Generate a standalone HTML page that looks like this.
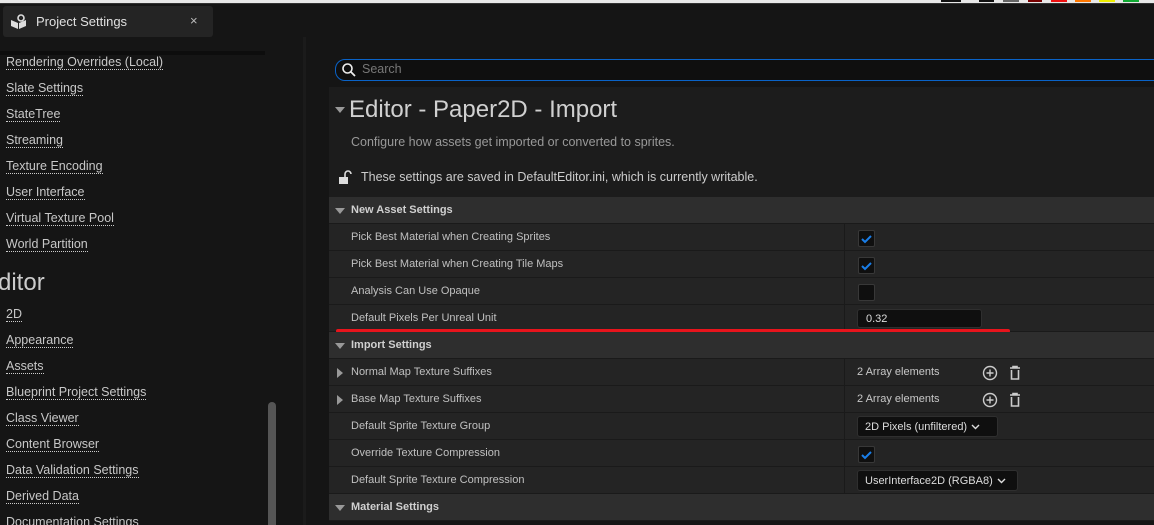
<!DOCTYPE html><html><head><style>
html,body{margin:0;width:1154px;height:525px;overflow:hidden}
body{background:#151515;font-family:"Liberation Sans",sans-serif;position:relative}
.a{position:absolute}
.l{position:absolute;left:6px;font-size:12.5px;color:#c8c8c8;border-bottom:1px dotted #ccc;line-height:14px}
.row{position:absolute;left:329px;width:825px;height:26px;background:#242424;border-bottom:1px solid #1a1a1a}
.row .t{position:absolute;left:22px;top:7px;font-size:11px;color:#c0c0c0}
.row .d{position:absolute;left:515px;top:0;width:1px;height:27px;background:#1a1a1a}
.hd{background:#2e2e2e}
.hd .t{font-weight:bold;color:#d0d0d0}
.tri{position:absolute;left:6px;top:11px;width:0;height:0;border-left:5px solid transparent;border-right:5px solid transparent;border-top:6px solid #999}
.trr{position:absolute;left:8px;top:9px;width:0;height:0;border-top:5px solid transparent;border-bottom:5px solid transparent;border-left:6px solid #999}
.cb{position:absolute;left:529px;top:6px;width:15px;height:15px;background:#0f0f0f;border:1px solid #383838;border-radius:2px}
.v{position:absolute;left:528px;font-size:11px;color:#c8c8c8}
.box{position:absolute;background:#0f0f0f;border:1px solid #2f2f2f;border-radius:3px;font-size:11px;color:#ddd;box-sizing:border-box;padding:4px 7px}
.ch{display:inline-block;vertical-align:middle;margin-left:4px}
</style></head><body>
<div class="a" style="left:0;top:0;width:1154px;height:3px;background:#e8e8e8"></div>
<div class="a" style="left:941px;top:0;width:20px;height:2px;background:#111"></div>
<div class="a" style="left:979px;top:0;width:15px;height:2px;background:#111"></div>
<div class="a" style="left:1003px;top:0;width:16px;height:2px;background:#666"></div>
<div class="a" style="left:1028px;top:0;width:14px;height:2px;background:#700"></div>
<div class="a" style="left:1051px;top:0;width:16px;height:2px;background:#e11"></div>
<div class="a" style="left:1075px;top:0;width:16px;height:2px;background:#f70"></div>
<div class="a" style="left:1099px;top:0;width:16px;height:2px;background:#ee0"></div>
<div class="a" style="left:1123px;top:0;width:16px;height:2px;background:#1a3"></div>
<div class="a" style="left:0;top:3px;width:1154px;height:1px;background:#333"></div>
<div class="a" style="left:3px;top:6px;width:210px;height:31px;background:#242424;border-radius:3px"></div>
<svg class="a" style="left:10px;top:13px" width="18" height="16" viewBox="0 0 18 16"><path d="M1 7l7 3v6l-7-3z M9 10l7-3v6l-7 3z" fill="#ddd"/><circle cx="11" cy="5" r="3" fill="none" stroke="#ddd" stroke-width="1.6"/></svg>
<div class="a" style="left:36px;top:14px;font-size:13px;color:#e0e0e0">Project Settings</div>
<div class="a" style="left:190px;top:13px;font-size:13px;color:#bbb">×</div>
<div class="a" style="left:0;top:51px;width:265px;height:4px;background:#0d0d0d"></div>
<div class="a" style="left:303px;top:37px;width:3px;height:488px;background:#1b1b1b"></div>
<div class="l" style="top:55px">Rendering Overrides (Local)</div>
<div class="l" style="top:81px">Slate Settings</div>
<div class="l" style="top:107px">StateTree</div>
<div class="l" style="top:133px">Streaming</div>
<div class="l" style="top:159px">Texture Encoding</div>
<div class="l" style="top:185px">User Interface</div>
<div class="l" style="top:211px">Virtual Texture Pool</div>
<div class="l" style="top:237px">World Partition</div>
<div class="a" style="left:-2px;top:269px;font-size:24px;color:#ccc">ditor</div>
<div class="l" style="top:307px">2D</div>
<div class="l" style="top:333px">Appearance</div>
<div class="l" style="top:359px">Assets</div>
<div class="l" style="top:385px">Blueprint Project Settings</div>
<div class="l" style="top:411px">Class Viewer</div>
<div class="l" style="top:437px">Content Browser</div>
<div class="l" style="top:463px">Data Validation Settings</div>
<div class="l" style="top:489px">Derived Data</div>
<div class="l" style="top:515px">Documentation Settings</div>
<div class="a" style="left:268px;top:402px;width:8px;height:130px;background:#555;border-radius:4px"></div>
<div class="a" style="left:335px;top:59px;width:830px;height:22px;box-sizing:border-box;border:1px solid #0a63c8;border-radius:10px;background:#0f0f0f"></div>
<svg class="a" style="left:341px;top:62px" width="16" height="16" viewBox="0 0 16 16"><circle cx="6.5" cy="6.5" r="4.5" fill="none" stroke="#eee" stroke-width="1.6"/><path d="M10 10l4 4" stroke="#eee" stroke-width="1.8"/></svg>
<div class="a" style="left:362px;top:62px;font-size:12.5px;color:#777">Search</div>
<div class="a" style="left:329px;top:87px;width:825px;height:110px;background:#1c1c1c"></div>
<div class="a" style="left:335px;top:107px;width:0;height:0;border-left:5px solid transparent;border-right:5px solid transparent;border-top:6px solid #999"></div>
<div class="a" style="left:349px;top:96px;font-size:24px;color:#d0d0d0">Editor - Paper2D - Import</div>
<div class="a" style="left:351px;top:135px;font-size:12.5px;color:#999">Configure how assets get imported or converted to sprites.</div>
<svg class="a" style="left:338px;top:169px" width="14" height="16" viewBox="0 0 14 16"><rect x="1" y="8" width="9" height="7" fill="#ddd"/><path d="M7 8V5a3 3 0 0 1 6 0" fill="none" stroke="#ddd" stroke-width="1.6"/></svg>
<div class="a" style="left:361px;top:170px;font-size:12.5px;color:#ccc">These settings are saved in DefaultEditor.ini, which is currently writable.</div>
<div class="row hd" style="top:197px"><div class="tri"></div><div class="t">New Asset Settings</div></div>
<div class="row" style="top:224px"><div class="t">Pick Best Material when Creating Sprites</div><div class="d"></div><div class="cb"><svg width="15" height="15"><path d="M3 8l3 3 6-6" stroke="#1a7ee8" stroke-width="2" fill="none"/></svg></div></div>
<div class="row" style="top:251px"><div class="t">Pick Best Material when Creating Tile Maps</div><div class="d"></div><div class="cb"><svg width="15" height="15"><path d="M3 8l3 3 6-6" stroke="#1a7ee8" stroke-width="2" fill="none"/></svg></div></div>
<div class="row" style="top:278px"><div class="t">Analysis Can Use Opaque</div><div class="d"></div><div class="cb"></div></div>
<div class="row" style="top:305px"><div class="t">Default Pixels Per Unreal Unit</div><div class="d"></div><div class="box" style="left:528px;top:4px;width:125px;height:19px;padding:3px 8px">0.32</div></div>
<div class="a" style="left:336px;top:329px;width:674px;height:4px;background:#e8141c;border-radius:2px"></div>
<div class="row hd" style="top:332px"><div class="tri"></div><div class="t">Import Settings</div></div>
<div class="row" style="top:359px"><div class="trr"></div><div class="t">Normal Map Texture Suffixes</div><div class="d"></div><div class="v" style="top:7px">2 Array elements</div>
<svg class="a" style="left:653px;top:6px" width="40" height="16"><circle cx="8" cy="8" r="6.5" fill="none" stroke="#ccc" stroke-width="1.4"/><path d="M8 4.5v7M4.5 8h7" stroke="#ccc" stroke-width="1.4"/><path d="M28 3h10M31 3V1.5h4V3M29.5 5v9h7V5" fill="none" stroke="#ccc" stroke-width="1.6"/></svg></div>
<div class="row" style="top:386px"><div class="trr"></div><div class="t">Base Map Texture Suffixes</div><div class="d"></div><div class="v" style="top:7px">2 Array elements</div>
<svg class="a" style="left:653px;top:6px" width="40" height="16"><circle cx="8" cy="8" r="6.5" fill="none" stroke="#ccc" stroke-width="1.4"/><path d="M8 4.5v7M4.5 8h7" stroke="#ccc" stroke-width="1.4"/><path d="M28 3h10M31 3V1.5h4V3M29.5 5v9h7V5" fill="none" stroke="#ccc" stroke-width="1.6"/></svg></div>
<div class="row" style="top:413px"><div class="t">Default Sprite Texture Group</div><div class="d"></div><div class="box" style="left:528px;top:3px;width:141px;height:21px">2D Pixels (unfiltered)<svg class="ch" width="9" height="6"><path d="M1 1l3.5 3.5L8 1" stroke="#ddd" stroke-width="1.4" fill="none"/></svg></div></div>
<div class="row" style="top:440px"><div class="t">Override Texture Compression</div><div class="d"></div><div class="cb"><svg width="15" height="15"><path d="M3 8l3 3 6-6" stroke="#1a7ee8" stroke-width="2" fill="none"/></svg></div></div>
<div class="row" style="top:467px"><div class="t">Default Sprite Texture Compression</div><div class="d"></div><div class="box" style="left:528px;top:3px;width:161px;height:21px">UserInterface2D (RGBA8)<svg class="ch" width="9" height="6"><path d="M1 1l3.5 3.5L8 1" stroke="#ddd" stroke-width="1.4" fill="none"/></svg></div></div>
<div class="row hd" style="top:494px"><div class="tri"></div><div class="t">Material Settings</div></div>
</body></html>
